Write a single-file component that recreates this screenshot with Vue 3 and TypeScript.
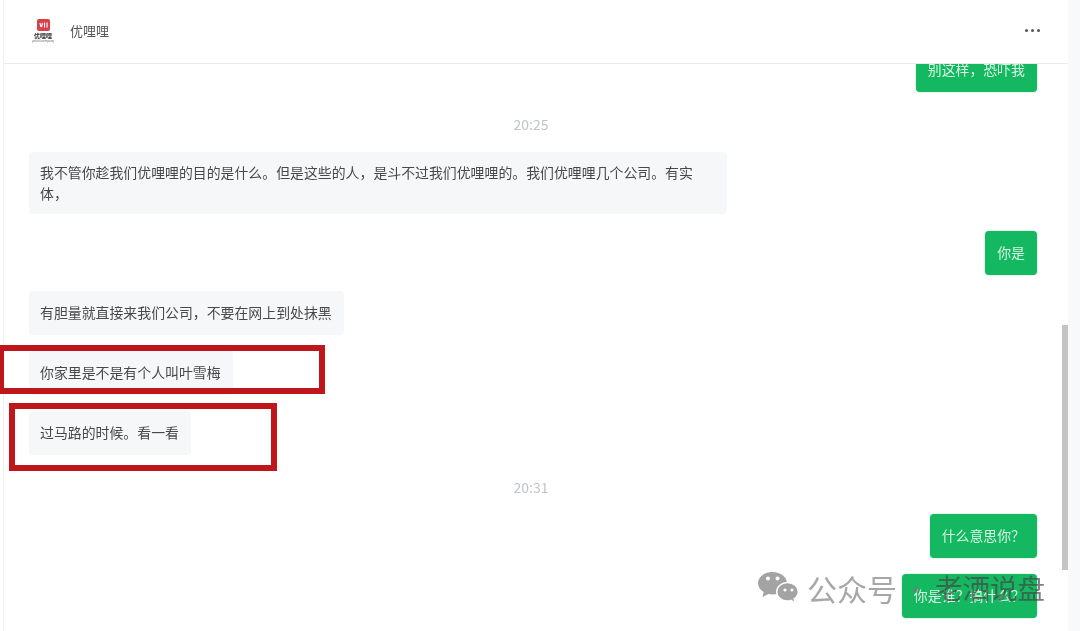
<script setup lang="ts">
type Item =
  | { kind: 'time'; text: string }
  | { kind: 'in' | 'out'; text: string; wide?: boolean }

const items: Item[] = [
  { kind: 'out', text: '别这样，恐吓我' },
  { kind: 'time', text: '20:25' },
  {
    kind: 'in',
    wide: true,
    text: '我不管你趁我们优哩哩的目的是什么。但是这些的人，是斗不过我们优哩哩的。我们优哩哩几个公司。有实\n体，',
  },
  { kind: 'out', text: '你是' },
  { kind: 'in', text: '有胆量就直接来我们公司，不要在网上到处抹黑' },
  { kind: 'in', text: '你家里是不是有个人叫叶雪梅' },
  { kind: 'in', text: '过马路的时候。看一看' },
  { kind: 'time', text: '20:31' },
  { kind: 'out', text: '什么意思你？' },
  { kind: 'out', text: '你是谁？搞什么？' },
]
</script>

<template>
  <div class="page">
    <div class="chat">
      <header class="head">
        <div class="logo">
          <svg width="13" height="12" viewBox="0 0 13 12">
            <rect width="13" height="12" rx="2" fill="#d8404a" />
            <path d="M3 4l1 4M5.500 4l-1 4M7.500 3.500v5M10 3.500v5" stroke="#fff" stroke-width="1.100" fill="none" />
          </svg>
          <span class="logo-name">优哩哩</span>
          <span class="logo-sub">youlili company</span>
        </div>
        <span class="name">优哩哩</span>
        <span class="more"><i /><i /><i /></span>
      </header>
      <main class="list">
        <div class="rows">
          <template v-for="(item, i) in items" :key="i">
            <div v-if="item.kind === 'time'" class="time">{{ item.text }}</div>
            <div v-else class="row" :class="item.kind">
              <div class="bubble" :class="{ wide: item.wide }">{{ item.text }}</div>
            </div>
          </template>
        </div>
      </main>
      <div class="thumb" />
    </div>
    <div class="side" />

    <div class="mark mark-a" />
    <div class="mark mark-b" />

    <div class="watermark">
      <svg width="41" height="33" viewBox="0 0 41 33">
        <path d="M14.500 0C6.500 0 0 5 0 11.200c0 3.600 2.200 6.800 5.600 8.800L4.500 25l6-3c1.300.3 2.600.4 4 .4 8 0 14.500-5 14.500-11.200S22.500 0 14.500 0z" fill="#a3a3a3" />
        <path d="M29.500 10.500c-6 0-10.800 4.100-10.800 9.200s4.800 9.200 10.800 9.200c1.300 0 2.500-.2 3.700-.6l3.800 3.200-.9-4.700c2.600-1.700 4.200-4.200 4.200-7.100 0-5.100-4.800-9.200-10.800-9.200z" fill="#a3a3a3" stroke="#fff" stroke-width="1.400" />
        <circle cx="10" cy="6.500" r="2" fill="#fff" />
        <circle cx="19.500" cy="6.500" r="2" fill="#fff" />
        <circle cx="27" cy="18" r="1.600" fill="#fff" />
        <circle cx="34" cy="18" r="1.600" fill="#fff" />
      </svg>
      <span class="wm-a">公众号</span>
      <span class="wm-dot">·</span>
      <span class="wm-b">老洒说盘</span>
    </div>
  </div>
</template>

<style scoped>
.page {
  position: relative;
  display: flex;
  width: 1080px;
  height: 631px;
  overflow: hidden;
  background: #fff;
  font-family: "Noto Sans CJK SC", "Liberation Sans", sans-serif;
  color: #444;
  filter: blur(0.5px);
}

.chat {
  position: relative;
  display: flex;
  flex: 1;
  flex-direction: column;
  min-width: 0;
  margin-left: 3px;
  border-left: 1px solid #eee;
}

.side {
  width: 12px;
  background: #f8f9fa;
}

.head {
  display: flex;
  align-items: center;
  flex: none;
  height: 61px;
  padding: 0 28px 2px 29px;
  border-bottom: 1px solid #ebebeb;
  background: #fff;
}

.logo {
  display: flex;
  flex-direction: column;
  align-items: center;
  width: 20px;
  margin-right: 17px;
  line-height: 1;
}

.logo svg {
  display: block;
}

.logo-name {
  margin-top: 2px;
  font-size: 6px;
  font-weight: 700;
  color: #333;
  white-space: nowrap;
}

.logo-sub {
  margin-top: 1px;
  font-size: 3px;
  color: #666;
  white-space: nowrap;
}

.name {
  flex: 1;
  font-size: 13px;
  color: #555;
}

.more {
  display: flex;
  gap: 3px;
}

.more i {
  width: 3px;
  height: 3px;
  border-radius: 50%;
  background: #555;
}

.list {
  flex: 1;
  min-height: 0;
  overflow: hidden;
}

.rows {
  display: flex;
  flex-direction: column;
  gap: 16px;
  margin-top: -16px;
  padding: 0 31px 0 25px;
}

.row {
  display: flex;
}

.row.out {
  justify-content: flex-end;
}

.bubble {
  padding: 10px 12px 12px 11px;
  border-radius: 4px;
  font-size: 13.900px;
  line-height: 22px;
  white-space: pre-line;
}

.in .bubble {
  background: #f6f7f8;
  color: #484848;
}

.out .bubble {
  padding: 10px 12px 12px;
  background: #14b860;
  color: #d8f5e4;
  box-shadow: 0 0 2px rgba(20, 184, 96, 0.4);
}

.bubble.wide {
  box-sizing: border-box;
  width: 698px;
  padding: 10px 11px;
  line-height: 21px;
  margin-bottom: 1px;
}

.time {
  padding: 5px 4px 1px 0;
  font-size: 14px;
  line-height: 22px;
  text-align: center;
  color: #c0c4c8;
}

.in + .time {
  margin-top: -1px;
  padding-top: 6px;
  padding-bottom: 0;
}

.thumb {
  position: absolute;
  top: 325px;
  right: 0;
  width: 6px;
  height: 245px;
  background: #c4c4c4;
}

.mark {
  position: absolute;
  box-sizing: border-box;
  border: 6px solid #bf161c;
}

.mark-a {
  top: 345px;
  left: -2px;
  width: 327px;
  height: 49px;
}

.mark-b {
  top: 403px;
  left: 9px;
  width: 268px;
  height: 68px;
}

.watermark {
  position: absolute;
  top: 571px;
  left: 758px;
  display: flex;
  align-items: center;
  height: 33px;
  font-size: 30px;
  line-height: 1;
  white-space: nowrap;
  pointer-events: none;
}

.watermark svg {
  margin-top: 2px;
}

.wm-a {
  margin-left: 8px;
  color: rgba(120, 120, 120, 0.65);
}

.wm-dot {
  width: 38px;
  text-align: center;
  color: rgba(120, 120, 120, 0.55);
}

.wm-b {
  font-size: 27.500px;
  color: rgba(70, 70, 70, 0.7);
}
</style>
